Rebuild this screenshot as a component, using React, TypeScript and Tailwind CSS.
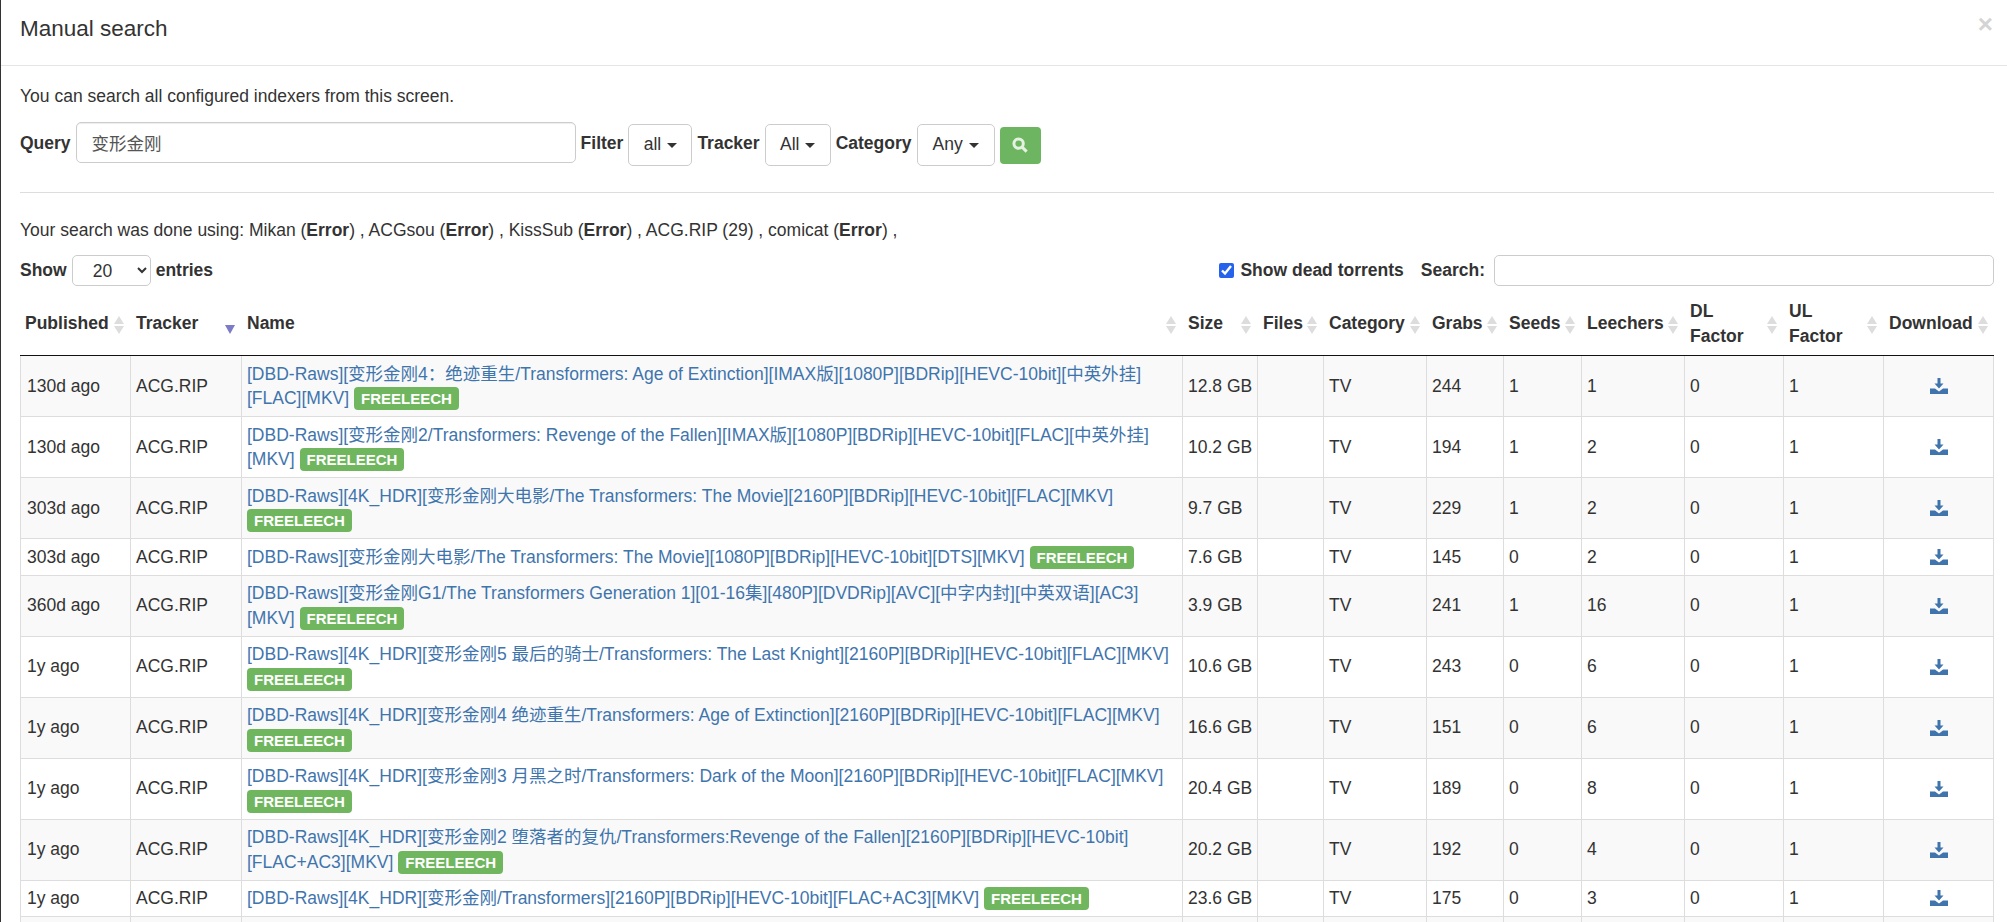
import React from "react";

const rows = [
  { age: "130d ago", name: "[DBD-Raws][变形金刚4：绝迹重生/Transformers: Age of Extinction][IMAX版][1080P][BDRip][HEVC-10bit][中英外挂][FLAC][MKV]", size: "12.8 GB", grabs: 244, seeds: 1, leechers: 1 },
  { age: "130d ago", name: "[DBD-Raws][变形金刚2/Transformers: Revenge of the Fallen][IMAX版][1080P][BDRip][HEVC-10bit][FLAC][中英外挂][MKV]", size: "10.2 GB", grabs: 194, seeds: 1, leechers: 2 },
  { age: "303d ago", name: "[DBD-Raws][4K_HDR][变形金刚大电影/The Transformers: The Movie][2160P][BDRip][HEVC-10bit][FLAC][MKV]", size: "9.7 GB", grabs: 229, seeds: 1, leechers: 2 },
  { age: "303d ago", name: "[DBD-Raws][变形金刚大电影/The Transformers: The Movie][1080P][BDRip][HEVC-10bit][DTS][MKV]", size: "7.6 GB", grabs: 145, seeds: 0, leechers: 2 },
  { age: "360d ago", name: "[DBD-Raws][变形金刚G1/The Transformers Generation 1][01-16集][480P][DVDRip][AVC][中字内封][中英双语][AC3][MKV]", size: "3.9 GB", grabs: 241, seeds: 1, leechers: 16 },
  { age: "1y ago", name: "[DBD-Raws][4K_HDR][变形金刚5 最后的骑士/Transformers: The Last Knight][2160P][BDRip][HEVC-10bit][FLAC][MKV]", size: "10.6 GB", grabs: 243, seeds: 0, leechers: 6 },
  { age: "1y ago", name: "[DBD-Raws][4K_HDR][变形金刚4 绝迹重生/Transformers: Age of Extinction][2160P][BDRip][HEVC-10bit][FLAC][MKV]", size: "16.6 GB", grabs: 151, seeds: 0, leechers: 6 },
  { age: "1y ago", name: "[DBD-Raws][4K_HDR][变形金刚3 月黑之时/Transformers: Dark of the Moon][2160P][BDRip][HEVC-10bit][FLAC][MKV]", size: "20.4 GB", grabs: 189, seeds: 0, leechers: 8 },
  { age: "1y ago", name: "[DBD-Raws][4K_HDR][变形金刚2 堕落者的复仇/Transformers:Revenge of the Fallen][2160P][BDRip][HEVC-10bit][FLAC+AC3][MKV]", size: "20.2 GB", grabs: 192, seeds: 0, leechers: 4 },
  { age: "1y ago", name: "[DBD-Raws][4K_HDR][变形金刚/Transformers][2160P][BDRip][HEVC-10bit][FLAC+AC3][MKV]", size: "23.6 GB", grabs: 175, seeds: 0, leechers: 3 },
];

const columns = [
  { label: "Published", width: "w-[110px]", pad: "pl-[5px]" },
  { label: "Tracker", width: "w-[111px]", active: true },
  { label: "Name", width: "w-[941px]" },
  { label: "Size", width: "w-[75px]" },
  { label: "Files", width: "w-[66px]" },
  { label: "Category", width: "w-[103px]" },
  { label: "Grabs", width: "w-[77px]" },
  { label: "Seeds", width: "w-[78px]" },
  { label: "Leechers", width: "w-[103px]" },
  { label: "DL Factor", width: "w-[99px]" },
  { label: "UL Factor", width: "w-[100px]" },
  { label: "Download", width: "w-[111px]" },
];

const cell = "pl-[5px] pr-[4px] py-[5.5px] border-b border-l border-[#ddd]";

function SortIcon({ active }: { active?: boolean }) {
  if (active) {
    return (
      <svg className="absolute right-[6px] bottom-[21px]" width="10" height="9" viewBox="0 0 10 9">
        <path d="M0 0h10L5 9z" fill="#7b7bc8" />
      </svg>
    );
  }
  return (
    <svg className="absolute top-[24px] right-[6px]" width="10" height="18" viewBox="0 0 10 18">
      <path d="M5 0l5 8H0zM5 18l5-8H0z" fill="#dddddd" />
    </svg>
  );
}

function Caret() {
  return <span className="inline-block ml-[1px] align-middle w-0 h-0 border-t-[5px] border-t-[#333] border-x-[5px] border-x-transparent" />;
}

function DropBtn({ label, width }: { label: string; width: string }) {
  return (
    <button className={`${width} h-[42px] mt-[2px] border border-[#ccc] rounded-[5px] bg-white text-[#333] text-center`}>
      {label} <Caret />
    </button>
  );
}

function SaveIcon() {
  return (
    <svg className="block mx-auto" width="18" height="16" viewBox="0 0 18 16">
      <path d="M7.5 0h3v5.5h3L9 10.5 4.5 5.5h3zM0 10.5h5L9 13.5l4-3h5V16H0z" fill="#3f74ad" />
    </svg>
  );
}

function Err({ name }: { name: string }) {
  return (
    <>
      {name} (<b>Error</b>) ,{" "}
    </>
  );
}

export default function App() {
  return (
    <div className="h-[922px] overflow-hidden bg-white border-l border-[#333] text-[17.5px] text-[#333] font-['Liberation_Sans','Noto_Sans_CJK_SC',sans-serif] leading-[24.5px]">
      <div className="h-[66px] border-b border-[#e5e5e5] flex items-start justify-between pl-[19px] pr-[14px] pt-[15px]">
        <h4 className="text-[22.5px] leading-[28px] font-normal">Manual search</h4>
        <span className="text-[26px] leading-[18px] font-bold text-[#d4d4d4]">×</span>
      </div>
      <div className="pl-[19px] pr-[13px] pt-[18px]">
        <p className="mb-[13px]">You can search all configured indexers from this screen.</p>
        <div className="flex items-center gap-[5px] h-[44px]">
          <label className="font-bold">Query</label>
          <input
            readOnly
            value="变形金刚"
            className="w-[500px] h-[41px] mb-[3px] px-[15px] border border-[#ccc] rounded-[5px] shadow-[inset_0_1px_1px_rgba(0,0,0,0.075)] text-[#555]"
          />
          <label className="font-bold">Filter</label>
          <DropBtn label="all" width="w-[64px]" />
          <label className="font-bold">Tracker</label>
          <DropBtn label="All" width="w-[66px]" />
          <label className="font-bold">Category</label>
          <DropBtn label="Any" width="w-[78px]" />
          <button className="w-[41px] h-[37px] mt-[3px] rounded-[4px] bg-[#6eb562] flex items-center justify-center">
            <svg width="16" height="16" viewBox="0 0 15 15" fill="none" stroke="#e4f2e1" strokeWidth="2.8">
              <circle cx="6.2" cy="6.2" r="4.4" />
              <path d="M9.5 9.5l4.2 4.2" />
            </svg>
          </button>
        </div>
        <hr className="mt-[26px] mb-[25px] border-t border-[#ddd]" />
        <p className="mb-[13px]">
          Your search was done using: <Err name="Mikan" /><Err name="ACGsou" /><Err name="KissSub" />ACG.RIP (29) , <Err name="comicat" />
        </p>
        <div className="flex items-center justify-between h-[31px]">
          <div className="flex items-center gap-[5px] font-bold">
            Show
            <select className="w-[79px] h-[31px] pl-[16px] border border-[#ccc] rounded-[5px] bg-white font-normal">
              <option>20</option>
            </select>
            entries
          </div>
          <div className="flex items-center font-bold">
            <input type="checkbox" readOnly checked className="w-[15px] h-[15px] mr-[6px] accent-[#2563eb]" />
            Show dead torrents
            <span className="ml-[17px] mr-[9px]">Search:</span>
            <input className="w-[500px] h-[31px] border border-[#ccc] rounded-[5px]" />
          </div>
        </div>
        <table className="table-fixed w-[1974px] mt-[6px] border-separate border-spacing-0">
          <colgroup>
            {columns.map((c) => (
              <col key={c.label} className={c.width} />
            ))}
          </colgroup>
          <thead>
            <tr>
              {columns.map((c) => (
                <th key={c.label} className={`relative h-[64px] text-left font-bold ${c.pad ?? "pl-[6px]"} pr-[14px] border-b border-[#111]`}>
                  <span className="block max-w-[76px]">{c.label === "Download" || c.label === "Published" ? <span className="whitespace-nowrap">{c.label}</span> : c.label}</span>
                  <SortIcon active={c.active} />
                </th>
              ))}
            </tr>
          </thead>
          <tbody>
            {rows.map((r, i) => (
              <tr key={i} className={i % 2 === 0 ? "bg-[#f9f9f9]" : "bg-white"}>
                <td className={`${cell} pl-[6px]`}>{r.age}</td>
                <td className={cell}>ACG.RIP</td>
                <td className={`${cell} text-[#3f75ad]`}>
                  {r.name}{" "}
                  <span className="inline-block px-[7px] h-[23px] leading-[23px] rounded-[4px] bg-[#70b65f] text-white text-[15px] font-bold">
                    FREELEECH
                  </span>
                </td>
                <td className={`${cell} whitespace-nowrap`}>{r.size}</td>
                <td className={cell}></td>
                <td className={cell}>TV</td>
                <td className={cell}>{r.grabs}</td>
                <td className={cell}>{r.seeds}</td>
                <td className={cell}>{r.leechers}</td>
                <td className={cell}>0</td>
                <td className={cell}>1</td>
                <td className={`${cell} border-r`}><SaveIcon /></td>
              </tr>
            ))}
            <tr className="bg-[#f9f9f9]">
              <td className={cell}>&nbsp;</td>
              <td className={cell}></td>
              <td className={cell}></td>
              <td className={cell}></td>
              <td className={cell}></td>
              <td className={cell}></td>
              <td className={cell}></td>
              <td className={cell}></td>
              <td className={cell}></td>
              <td className={cell}></td>
              <td className={cell}></td>
              <td className={`${cell} border-r`}></td>
            </tr>
          </tbody>
        </table>
      </div>
    </div>
  );
}
